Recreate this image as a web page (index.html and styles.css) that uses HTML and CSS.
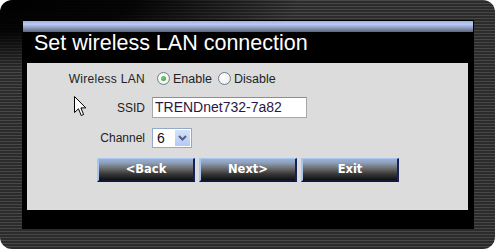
FILE: index.html
```html
<!DOCTYPE html>
<html>
<head>
<meta charset="utf-8">
<link rel="stylesheet" href="styles.css">
</head>
<body>
<div class="frame">
  <div class="panel">
    <div class="bluebar"></div>
    <div class="title">Set wireless LAN connection</div>
    <div class="content">
      <div class="form">
        <div class="label wide">Wireless LAN</div>
        <div class="radios">
          <span class="radio checked"></span><span class="rtext">Enable</span>
          <span class="radio"></span><span class="rtext">Disable</span>
        </div>
        <div class="label">SSID</div>
        <div class="ctrl"><div class="input">TRENDnet732-7a82</div></div>
        <div class="label">Channel</div>
        <div class="ctrl">
          <div class="select"><span class="sval">6</span><span class="sbtn"><svg width="9" height="6" viewBox="0 0 9 6"><path d="M1 1 L4.5 4.5 L8 1" fill="none" stroke="#4d6185" stroke-width="2"/></svg></span></div>
        </div>
        <div class="buttons">
          <div class="btn">&lt;Back</div>
          <div class="btn">Next&gt;</div>
          <div class="btn">Exit</div>
        </div>
      </div>
      <svg class="cursor" width="13" height="21" viewBox="0 0 13 21"><path d="M0.5 0.5 L0.5 16.5 L4.5 12.8 L7.2 19.5 L9.6 18.5 L6.9 11.9 L11.8 11.9 Z" fill="#fff" stroke="#000" stroke-width="1"/></svg>
    </div>
  </div>
</div>
</body>
</html>
```

FILE: styles.css
```css
html, body { margin: 0; padding: 0; background: #fff; }
.frame {
  width: 495px; height: 249px; box-sizing: border-box;
  border-radius: 12px;
  padding: 20px 21px 20px 22px;
  background:
    radial-gradient(ellipse 300px 70px at 0 0, rgba(0,0,0,1) 0%, rgba(0,0,0,0.9) 45%, rgba(0,0,0,0) 100%),
    repeating-linear-gradient(to bottom, #474747 0px, #474747 1px, #2b2b2b 1px, #2b2b2b 3px);
}
.panel {
  background: #000; height: 100%;
  display: flex; flex-direction: column;
}
.bluebar {
  height: 11px; margin: 1px 1px 0 1px;
  background: linear-gradient(to bottom, #9db3e8 0%, #b9c9f2 30%, #8a98be 65%, #5f6672 100%);
}
.title {
  height: 31px; box-sizing: border-box;
  padding-left: 12px;
  font-family: "Liberation Sans", Arial, sans-serif;
  font-size: 21.5px; line-height: 22px; color: #fff;
}
.content {
  position: relative;
  flex: 1;
  margin: 0 6px 19px 5px;
  background: #dcdcdc;
  font-family: "Liberation Sans", Arial, sans-serif;
  font-size: 12px; color: #222;
}
.form {
  display: grid;
  grid-template-columns: 118px auto;
  grid-template-rows: 17px 21px 20px 24px;
  column-gap: 7px; row-gap: 10px;
  padding-top: 7px;
}
.label { justify-self: end; align-self: center; }
.label.wide { letter-spacing: 0.3px; }
.radios { display: flex; align-items: center; padding-left: 5px; }
.radio {
  width: 11px; height: 11px; border-radius: 50%;
  border: 1px solid #6f7f90;
  background: radial-gradient(circle at 40% 40%, #fff 0%, #f2f2f2 60%, #d8dde2 100%);
  position: relative; box-sizing: content-box;
}
.radio.checked::after {
  content: ""; position: absolute; left: 3px; top: 3px;
  width: 5px; height: 5px; border-radius: 50%;
  background: radial-gradient(circle at 40% 40%, #7fd07f, #2f8f2f);
}
.rtext { margin-left: 3px; margin-right: 6px; font-size: 12.5px; }
.ctrl { display: flex; align-items: stretch; }
.input {
  width: 155px; box-sizing: border-box;
  border: 1px solid #a7a7a7; border-top-color: #8e8e8e;
  background: #fff; color: #2b1646;
  font-size: 14px; line-height: 19px; padding-left: 2px;
}
.select {
  width: 40px; box-sizing: border-box;
  border: 1px solid #94a9c3; background: #fff;
  display: flex; align-items: stretch;
}
.sval { flex: 1; font-size: 14px; line-height: 18px; padding-left: 4px; color: #111; }
.sbtn {
  width: 15px; margin: 1px 1px 1px 0;
  background: linear-gradient(to bottom, #d4e1fb, #b4c9f4);
  display: flex; align-items: center; justify-content: center;
}
.buttons {
  grid-column: 1 / 3;
  display: flex; gap: 4px;
  margin-left: 70px;
}
.btn {
  width: 98px; height: 24px; box-sizing: border-box;
  border-style: solid; border-width: 1px 2px 2px 2px;
  border-color: #a9c6ef #18205a #101838 #a9c6ef;
  background: linear-gradient(to bottom, #9bb2d6 0%, #8da0bc 18%, #6c6c6c 45%, #3a3a3a 70%, #111 100%);
  color: #fff;
  font-family: "DejaVu Sans", Verdana, sans-serif; font-weight: bold;
  font-size: 11.5px; line-height: 20px; text-align: center;
}
.cursor { position: absolute; left: 47px; top: 33px; }
```
